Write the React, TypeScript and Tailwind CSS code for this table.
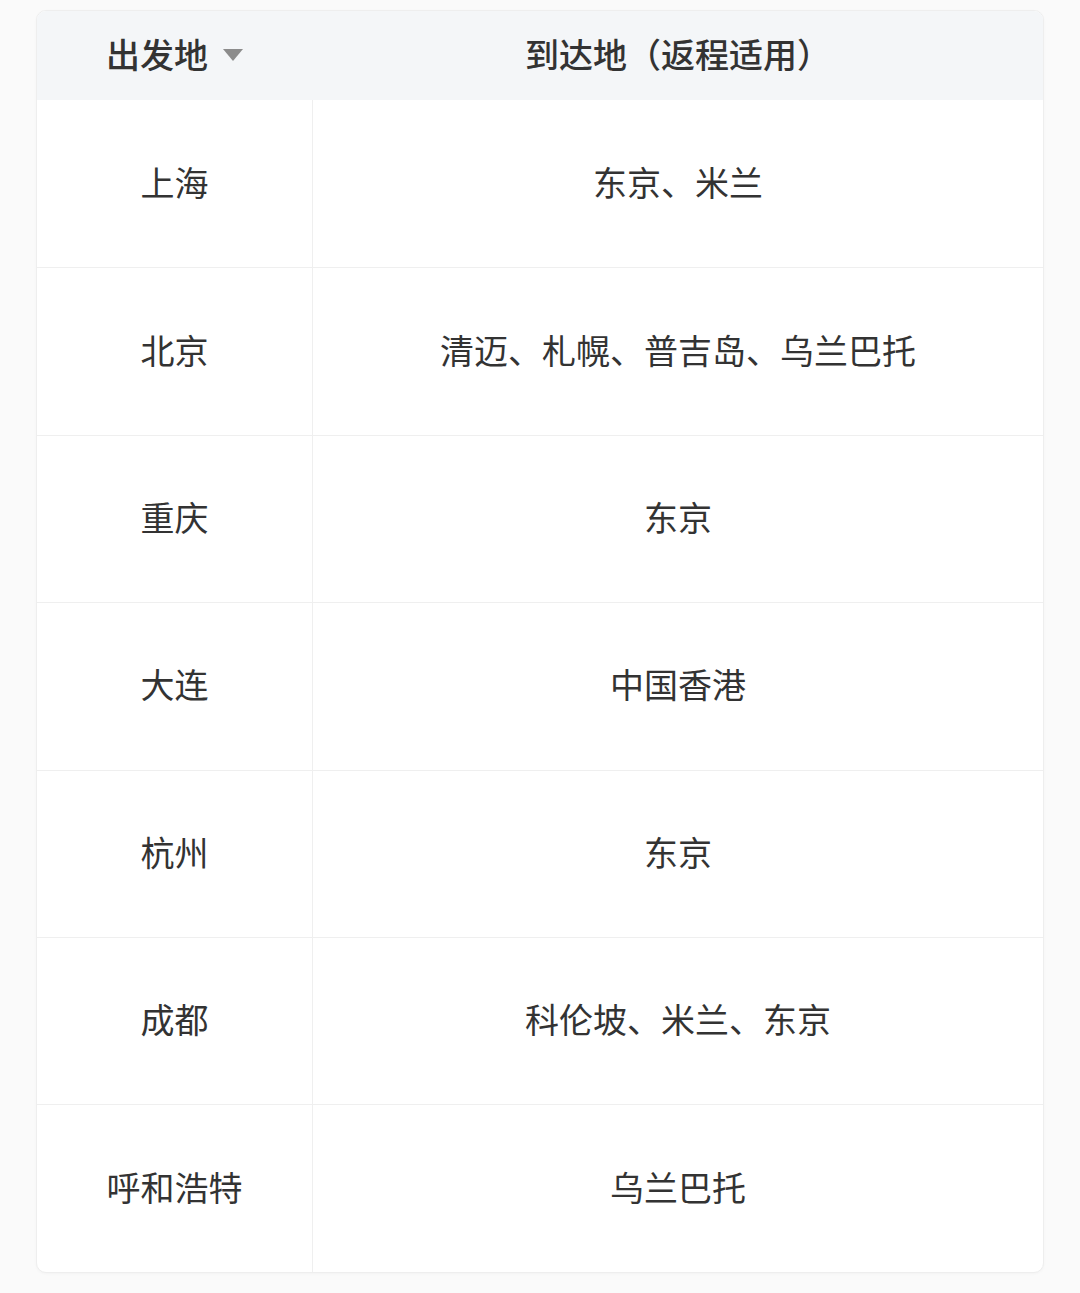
import React from 'react';

const rows: [string, string][] = [
  ['上海', '东京、米兰'],
  ['北京', '清迈、札幌、普吉岛、乌兰巴托'],
  ['重庆', '东京'],
  ['大连', '中国香港'],
  ['杭州', '东京'],
  ['成都', '科伦坡、米兰、东京'],
  ['呼和浩特', '乌兰巴托'],
];

const App = () => {
  return (
    <div
      className="w-[1080px] h-[1293px] bg-[#fafafa] pt-[10px] pl-[36px]"
      style={{ fontFamily: '"Noto Sans CJK SC", "Noto Sans", sans-serif' }}
    >
      <div className="w-[1008px] rounded-[10px] border border-[#eeeeee] bg-white overflow-hidden shadow-[0_1px_3px_rgba(0,0,0,0.03)]">
        {/* header */}
        <div className="grid grid-cols-[276px_1fr] h-[89px] bg-[#f4f6f8] text-[#333333] text-[34px] font-medium leading-none">
          <div className="flex items-center justify-center gap-[14px] pb-[4px]">
            <span>出发地</span>
            <svg width="22" height="14" viewBox="0 0 22 14" className="mt-[2px]">
              <path d="M1 1 H21 L11 13 Z" fill="#8c8c8c" />
            </svg>
          </div>
          <div className="flex items-center justify-center pb-[4px]">
            <span>到达地（返程适用）</span>
          </div>
        </div>

        {/* body */}
        {rows.map(([from, to], i) => (
          <div
            key={from}
            className={
              'grid grid-cols-[276px_1fr] h-[167.4px] text-[34px] leading-none text-[#333333] ' +
              (i > 0 ? 'border-t border-[#efefef]' : '')
            }
          >
            <div className="flex items-center justify-center border-r border-[#efefef] pb-[4px]">{from}</div>
            <div className="flex items-center justify-center pb-[4px]">{to}</div>
          </div>
        ))}
      </div>
    </div>
  );
};

export default App;
